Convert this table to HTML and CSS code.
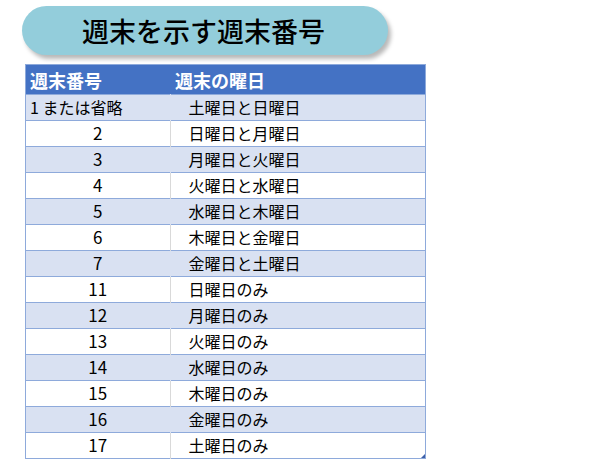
FILE: index.html
```html
<!DOCTYPE html>
<html lang="ja">
<head>
<meta charset="utf-8">
<link rel="stylesheet" href="styles.css">
</head>
<body>
<div class="page">
  <div class="title">週末を示す週末番号</div>
  <div class="sheet">
    <table class="tbl">
      <thead>
        <tr><th class="c1">週末番号</th><th class="c2">週末の曜日</th></tr>
      </thead>
      <tbody>
        <tr class="band"><td class="c1 left">1 または省略</td><td class="c2">土曜日と日曜日</td></tr>
        <tr><td class="c1">2</td><td class="c2">日曜日と月曜日</td></tr>
        <tr class="band"><td class="c1">3</td><td class="c2">月曜日と火曜日</td></tr>
        <tr><td class="c1">4</td><td class="c2">火曜日と水曜日</td></tr>
        <tr class="band"><td class="c1">5</td><td class="c2">水曜日と木曜日</td></tr>
        <tr><td class="c1">6</td><td class="c2">木曜日と金曜日</td></tr>
        <tr class="band"><td class="c1">7</td><td class="c2">金曜日と土曜日</td></tr>
        <tr><td class="c1">11</td><td class="c2">日曜日のみ</td></tr>
        <tr class="band"><td class="c1">12</td><td class="c2">月曜日のみ</td></tr>
        <tr><td class="c1">13</td><td class="c2">火曜日のみ</td></tr>
        <tr class="band"><td class="c1">14</td><td class="c2">水曜日のみ</td></tr>
        <tr><td class="c1">15</td><td class="c2">木曜日のみ</td></tr>
        <tr class="band"><td class="c1">16</td><td class="c2">金曜日のみ</td></tr>
        <tr><td class="c1">17</td><td class="c2">土曜日のみ</td></tr>
      </tbody>
    </table>
    <span class="corner"></span>
  </div>
</div>
</body>
</html>
```
FILE: styles.css
```css
html, body {
  margin: 0;
  padding: 0;
  background: #ffffff;
}
body {
  font-family: "Noto Sans CJK JP", "Noto Sans", sans-serif;
  color: #000;
}
.page {
  padding: 6px 0 0 0;
}
.title {
  margin-left: 22px;
  width: 366px;
  height: 49px;
  border-radius: 25px;
  background: #93cddb;
  box-shadow: 3px 4px 4px rgba(0, 0, 0, 0.28);
  display: flex;
  align-items: center;
  justify-content: center;
  font-size: 27px;
  font-weight: 500;
  letter-spacing: 0;
  line-height: 1;
  padding-right: 3px;
  box-sizing: border-box;
}
.sheet {
  position: relative;
  margin-top: 9px;
  margin-left: 25px;
  width: 401px;
}
.tbl {
  width: 401px;
  border-collapse: collapse;
  table-layout: fixed;
  border: 1px solid #8eaadb;
}
.tbl th {
  background: #4472c4;
  color: #fff;
  font-size: 18px;
  font-weight: 700;
  text-align: left;
  height: 29px;
  padding: 0 0 0 4px;
  line-height: 1;
}
.tbl th.c1 { width: 140px; }
.tbl th.c2 { padding-left: 5px; }
.tbl td {
  height: 23px;
  padding: 0 0 2px 0;
  font-size: 16px;
  line-height: 1;
  border-top: 1px solid #8eaadb;
  background: #fff;
}
.tbl tr.band td {
  background: #d9e1f2;
}
.tbl td.c1 {
  text-align: center;
  border-right: 1px solid #d9d9d9;
  font-size: 17px;
}
.tbl tr.band td.c1 {
  border-right-color: #d9e1f2;
}
.tbl td.c1.left {
  text-align: left;
  padding-left: 4px;
  font-size: 16px;
}
.tbl td.c2 {
  padding-left: 18px;
}
.corner {
  position: absolute;
  right: 1px;
  bottom: 1px;
  width: 0;
  height: 0;
  border-left: 4px solid transparent;
  border-bottom: 4px solid #3d5fa8;
}
```
